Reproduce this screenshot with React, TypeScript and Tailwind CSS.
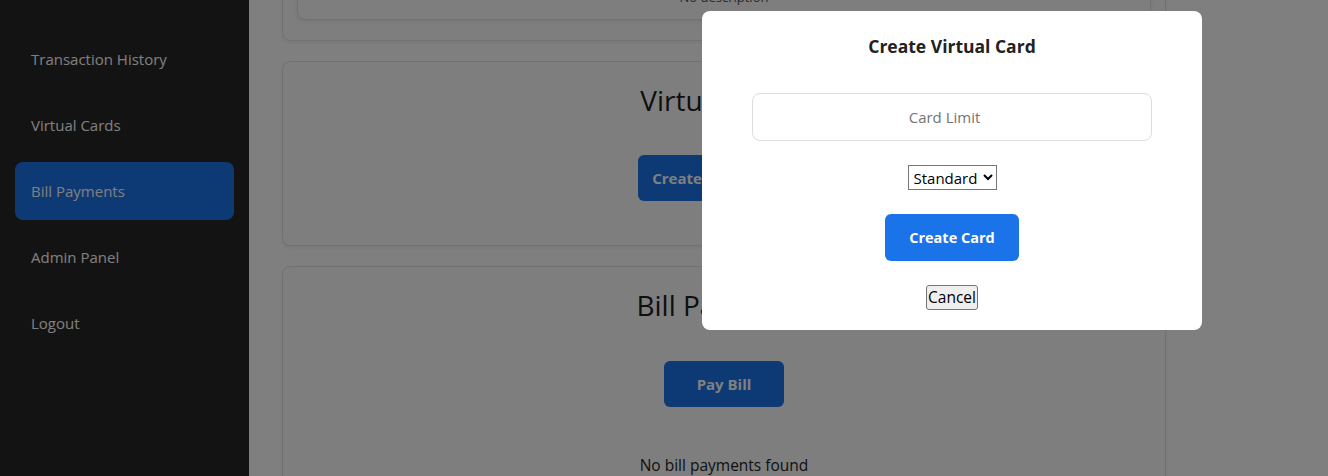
import { useState } from "react"

const navItems = [
  "Dashboard",
  "Accounts",
  "Transfers",
  "Loans",
  "Transaction History",
  "Virtual Cards",
  "Bill Payments",
  "Admin Panel",
  "Logout",
]

function Sidebar({ active }: { active: string }) {
  return (
    <aside className="w-[249px] shrink-0 bg-[#262626] px-[15px]">
      <nav className="-mt-[234px] flex flex-col gap-2">
        {navItems.map((item) => (
          <a
            key={item}
            href="#"
            className={
              "block rounded-lg px-4 py-[18px] text-[15px] leading-[22px] text-white " +
              (item === active ? "bg-[#1a73e8]" : "")
            }
          >
            {item}
          </a>
        ))}
      </nav>
    </aside>
  )
}

function Card({ children, className = "p-5" }: { children: React.ReactNode; className?: string }) {
  return (
    <section
      className={"rounded-lg border border-[#e3e3e3] bg-[#fcfcfc] shadow-[0_2px_4px_rgba(0,0,0,0.06)] " + className}
    >
      {children}
    </section>
  )
}

function CreateCardModal({ onClose }: { onClose: () => void }) {
  return (
    <div className="fixed inset-0 bg-black/50">
      <div className="absolute left-[702px] top-[11px] flex w-[500px] flex-col items-center gap-6 rounded-lg bg-white p-5">
        <h3 className="mb-2 text-[17.5px] font-bold leading-[30px] text-[#222]">Create Virtual Card</h3>
        <input
          type="number"
          placeholder="Card Limit"
          className="h-12 w-[400px] rounded-lg border border-[#dddddd] text-center text-[15px] outline-none placeholder:text-[#757575]"
        />
        <select className="h-[25px] border border-[#767676] bg-white px-[1px] text-[15px] text-black">
          <option>Standard</option>
          <option>Premium</option>
        </select>
        <button className="h-[47px] rounded-md bg-[#1a73e8] px-6 text-[14.5px] font-bold text-white">Create Card</button>
        <button
          onClick={onClose}
          className="h-[25px] rounded-[3px] border border-[#767676] bg-[#efefef] px-[1px] text-[15.5px] leading-none text-black"
        >
          Cancel
        </button>
      </div>
    </div>
  )
}

export default function App() {
  const [modalOpen, setModalOpen] = useState(true)

  return (
    <div
      className="relative flex h-[476px] overflow-hidden bg-white"
      style={{ fontFamily: '"Segoe UI", "Open Sans", sans-serif' }}
    >
      <Sidebar active="Bill Payments" />

      <main className="flex-1 pl-[33px]">
        <div className="-mt-[140px] flex w-[884px] flex-col gap-5">
          {/* loans list, scrolled mostly out of view */}
          <Card className="px-[14px] pt-[14px] pb-5">
            <div className="flex h-[145px] flex-col justify-end rounded-lg border border-[#e3e3e3] bg-[#fcfcfc] px-4 pb-[12px] text-center shadow-[0_2px_4px_rgba(0,0,0,0.06)]">
              <p className="text-[13px] leading-5 text-[#555]">No description</p>
            </div>
          </Card>

          <Card>
            <div className="flex flex-col items-center">
              <h2 className="mb-[37px] text-[28px] leading-9 text-[#1f1f1f]">Virtual Cards</h2>
              <button
                onClick={() => setModalOpen(true)}
                className="mb-[24px] h-[46px] rounded-md bg-[#1a73e8] px-[14px] text-[15px] font-bold text-white"
              >
                Create Virtual Card
              </button>
            </div>
          </Card>

          <Card>
            <div className="flex flex-col items-center">
              <h2 className="mb-[38px] text-[28px] leading-9 text-[#1f1f1f]">Bill Payments</h2>
              <button className="h-[46px] w-[120px] rounded-md bg-[#1a73e8] text-[15px] font-bold text-white">Pay Bill</button>
              <p className="mt-[46px] text-[15.5px] leading-6 text-[#1f1f1f]">No bill payments found</p>
            </div>
          </Card>
        </div>
      </main>

      {modalOpen && <CreateCardModal onClose={() => setModalOpen(false)} />}
    </div>
  )
}
